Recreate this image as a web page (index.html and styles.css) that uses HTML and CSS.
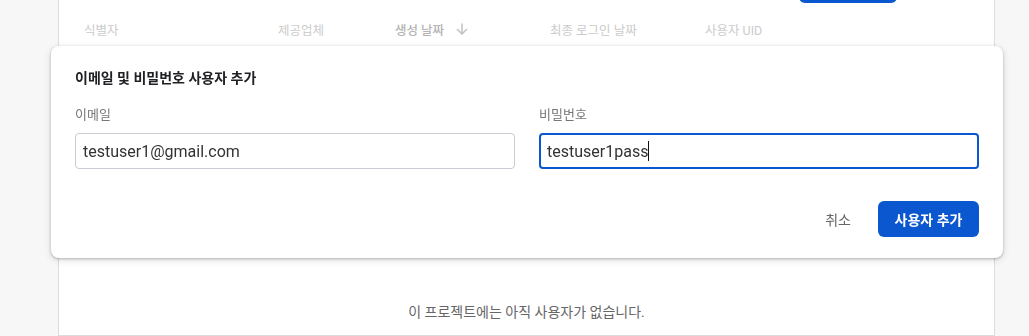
FILE: index.html
```html
<!DOCTYPE html>
<html>
    <head>
        <meta charset="utf-8">
        <title>사용자</title>
        <link rel="stylesheet" href="styles.css">
    </head>
    <body>
        <div class="card">
            <div class="toolbar">
                <button class="btn-top"></button>
            </div>
            <div class="thead">
                <span>식별자</span>
                <span>제공업체</span>
                <span class="sorted">생성 날짜
                    <svg width="12" height="12" viewBox="0 0 12 12"><path d="M6 0.5v10.5M1 6l5 5 5-5" fill="none" stroke="#c4c4c4" stroke-width="1.6"/></svg>
                </span>
                <span>최종 로그인 날짜</span>
                <span>사용자 UID</span>
            </div>
            <div class="empty">이 프로젝트에는 아직 사용자가 없습니다.</div>
        </div>

        <div class="dialog">
            <div class="dialog-title">이메일 및 비밀번호 사용자 추가</div>
            <div class="fields">
                <div class="field">
                    <label>이메일</label>
                    <div class="input">testuser1@gmail.com</div>
                </div>
                <div class="field">
                    <label>비밀번호</label>
                    <div class="input focused">testuser1pass<span class="caret"></span></div>
                </div>
            </div>
            <div class="actions">
                <button class="btn-text">취소</button>
                <button class="btn-primary">사용자 추가</button>
            </div>
        </div>
    </body>
</html>
```

FILE: styles.css
```css
*{
    margin: 0px;
    padding: 0px;
    box-sizing: border-box;
}
body{
    background-color: #f7f7f7;
    font-family: Roboto, "Noto Sans CJK KR", sans-serif;
    height: 336px;
    overflow: hidden;
}
.card{
    margin-left: 58px;
    width: 937px;
    height: 336px;
    background-color: #fff;
    border: 1px solid #dcdcdc;
    border-top: none;
}
.toolbar{
    height: 3px;
    display: flex;
    justify-content: flex-end;
    padding-right: 97px;
}
.btn-top{
    width: 98px;
    height: 36px;
    margin-top: -33px;
    border: none;
    border-radius: 6px;
    background-color: #0b57d0;
}
.thead{
    display: grid;
    grid-template-columns: 194px 117px 155px 155px 1fr;
    align-items: center;
    height: 52px;
    padding-left: 25px;
    font-size: 12.5px;
    color: #cbcbcb;
}
.thead .sorted{
    display: flex;
    align-items: center;
    gap: 12px;
    font-weight: 500;
    color: #b4b4b4;
}
.empty{
    padding-top: 247px;
    text-align: center;
    font-size: 14px;
    line-height: 20px;
    color: #666;
}
.dialog{
    position: fixed;
    left: 51px;
    top: 46px;
    width: 952px;
    height: 212px;
    padding: 22px 24px 0px;
    background-color: #fff;
    border-radius: 8px;
    box-shadow: 0px 1px 3px rgba(0,0,0,0.25), 0px 2px 8px rgba(0,0,0,0.12);
}
.dialog-title{
    font-size: 14px;
    line-height: 20px;
    font-weight: bold;
    color: #202124;
}
.fields{
    display: grid;
    grid-template-columns: 1fr 1fr;
    gap: 24px;
    margin-top: 19px;
}
.field label{
    display: block;
    font-size: 13px;
    line-height: 16px;
    color: #777;
    margin-bottom: 10px;
}
.input{
    height: 36px;
    border: 1px solid #c9ccd4;
    border-radius: 4px;
    padding: 0px 7px;
    display: flex;
    align-items: center;
    font-size: 16px;
    color: #333;
}
.input.focused{
    border: 2px solid #0b57d0;
    padding: 0px 6px;
}
.caret{
    display: inline-block;
    width: 1px;
    height: 20px;
    background-color: #111;
}
.actions{
    display: flex;
    justify-content: flex-end;
    align-items: center;
    gap: 15px;
    margin-top: 32px;
}
.actions button{
    height: 36px;
    border: none;
    font-family: Roboto, "Noto Sans CJK KR", sans-serif;
    font-size: 14px;
}
.btn-text{
    background: none;
    padding: 0px 12px;
    color: #666;
}
.btn-primary{
    width: 101px;
    border-radius: 6px;
    background-color: #0b57d0;
    color: #fff;
    font-weight: bold;
}
```
